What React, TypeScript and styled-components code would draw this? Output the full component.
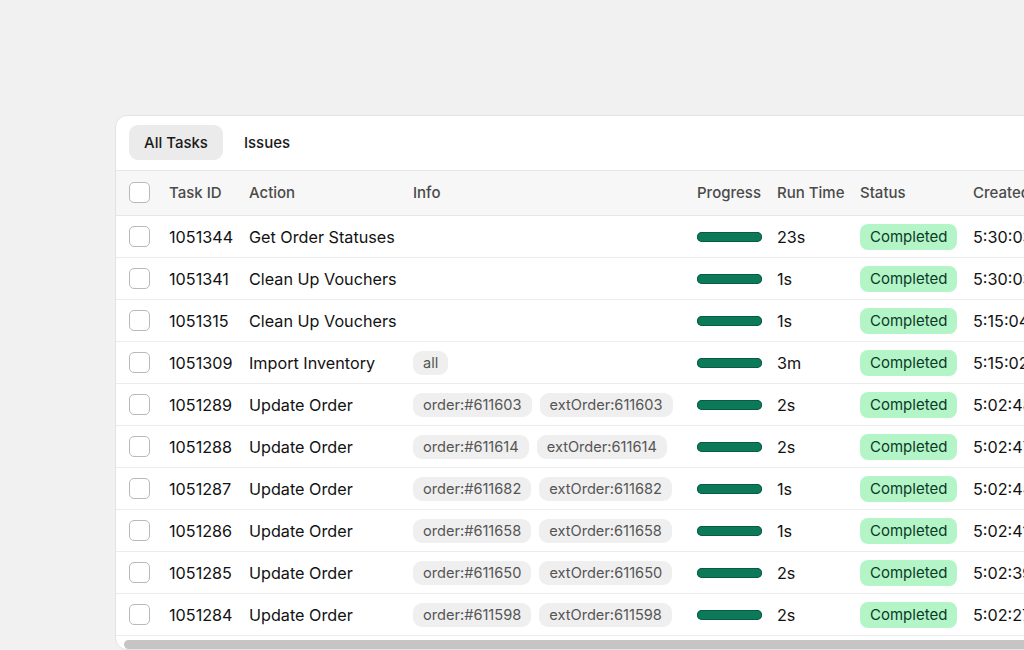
import styled, { createGlobalStyle } from "styled-components";

type Task = {
	id: number;
	action: string;
	info: string[];
	runTime: string;
	created: string;
};

const tasks: Task[] = [
	{ id: 1051344, action: "Get Order Statuses", info: [], runTime: "23s", created: "5:30:03" },
	{ id: 1051341, action: "Clean Up Vouchers", info: [], runTime: "1s", created: "5:30:03" },
	{ id: 1051315, action: "Clean Up Vouchers", info: [], runTime: "1s", created: "5:15:04" },
	{ id: 1051309, action: "Import Inventory", info: ["all"], runTime: "3m", created: "5:15:02" },
	{ id: 1051289, action: "Update Order", info: ["order:#611603", "extOrder:611603"], runTime: "2s", created: "5:02:48" },
	{ id: 1051288, action: "Update Order", info: ["order:#611614", "extOrder:611614"], runTime: "2s", created: "5:02:47" },
	{ id: 1051287, action: "Update Order", info: ["order:#611682", "extOrder:611682"], runTime: "1s", created: "5:02:44" },
	{ id: 1051286, action: "Update Order", info: ["order:#611658", "extOrder:611658"], runTime: "1s", created: "5:02:41" },
	{ id: 1051285, action: "Update Order", info: ["order:#611650", "extOrder:611650"], runTime: "2s", created: "5:02:39" },
	{ id: 1051284, action: "Update Order", info: ["order:#611598", "extOrder:611598"], runTime: "2s", created: "5:02:27" },
];

const App = () => {
	return (
		<>
			<GlobalStyle />
			<Page>
				<Card>
					<TabBar>
						<Tab $active>All Tasks</Tab>
						<Tab>Issues</Tab>
					</TabBar>
					<HeaderRow>
						<Cell>
							<Checkbox />
						</Cell>
						<HeadCell>Task ID</HeadCell>
						<HeadCell>Action</HeadCell>
						<HeadCell>Info</HeadCell>
						<HeadCell>Progress</HeadCell>
						<HeadCell>Run Time</HeadCell>
						<HeadCell>Status</HeadCell>
						<HeadCell>Created</HeadCell>
					</HeaderRow>
					{tasks.map((task) => (
						<Row key={task.id}>
							<Cell>
								<Checkbox />
							</Cell>
							<Cell>{task.id}</Cell>
							<Cell>{task.action}</Cell>
							<TagCell>
								{task.info.map((tag) => (
									<Tag key={tag}>{tag}</Tag>
								))}
							</TagCell>
							<Cell>
								<ProgressBar />
							</Cell>
							<Cell>{task.runTime}</Cell>
							<Cell>
								<StatusBadge>Completed</StatusBadge>
							</Cell>
							<Cell>{task.created}</Cell>
						</Row>
					))}
					<ScrollTrack>
						<ScrollThumb />
					</ScrollTrack>
				</Card>
			</Page>
		</>
	);
};

export default App;

const GlobalStyle = createGlobalStyle`
	html, body {
		margin: 0;
		padding: 0;
		background: #f1f1f1;
		overflow: hidden;
	}
	body {
		font-family: Inter, "Noto Sans", sans-serif;
		color: #111;
	}
`;

const Page = styled.div`
	width: 1024px;
	height: 650px;
	overflow: hidden;
	padding: 115px 0 0 115px;
	box-sizing: border-box;
`;

const Card = styled.div`
	width: 1100px;
	background: #ffffff;
	border: 1px solid #e3e3e3;
	border-radius: 12px;
	overflow: hidden;
	box-sizing: border-box;
`;

const TabBar = styled.div`
	display: flex;
	align-items: center;
	gap: 6px;
	padding: 9px 14px 10px 13px;
`;

const Tab = styled.div<{ $active?: boolean }>`
	height: 35px;
	display: flex;
	align-items: center;
	padding: 0 15px;
	border-radius: 9px;
	font-size: 15px;
	font-weight: 500;
	color: #1a1a1a;
	background: ${({ $active }) => ($active ? "#ebebeb" : "transparent")};
`;

const columns = "53px 80px 164px 284px 80px 83px 113px 1fr";

const HeaderRow = styled.div`
	display: grid;
	grid-template-columns: ${columns};
	align-items: center;
	height: 46px;
	padding-bottom: 1px;
	background: #f7f7f7;
	border-top: 1px solid #e6e6e6;
	border-bottom: 1px solid #e6e6e6;
	box-sizing: border-box;
`;

const Row = styled.div`
	display: grid;
	grid-template-columns: ${columns};
	align-items: center;
	height: 42px;
	border-bottom: 1px solid #ececec;
	box-sizing: border-box;
`;

const Cell = styled.div`
	display: flex;
	align-items: center;
	font-size: 16.2px;
	color: #121212;
	white-space: nowrap;
	&:first-child {
		padding-left: 13px;
	}
`;

const HeadCell = styled(Cell)`
	font-size: 15px;
	font-weight: 500;
	color: #4a4a4a;
`;

const TagCell = styled(Cell)`
	gap: 8px;
`;

const Checkbox = styled.div`
	width: 19px;
	height: 19px;
	border: 1.5px solid #b9b9b9;
	border-radius: 5px;
	background: #fff;
`;

const Tag = styled.span`
	height: 24px;
	display: inline-flex;
	align-items: center;
	padding: 0 10px;
	border-radius: 9px;
	background: #efefef;
	font-size: 14.6px;
	color: #555;
`;

const ProgressBar = styled.div`
	width: 65px;
	height: 10px;
	border-radius: 5px;
	background: #0c7a58;
	box-shadow: inset 0 0 0 1px #075c42;
`;

const StatusBadge = styled.span`
	height: 26px;
	display: inline-flex;
	align-items: center;
	padding: 0 10px;
	border-radius: 8px;
	background: #b4f5c8;
	font-size: 15px;
	color: #0b3a27;
`;

const ScrollTrack = styled.div`
	padding: 4px 0 0 8px;
`;

const ScrollThumb = styled.div`
	width: 1000px;
	height: 9px;
	border-radius: 5px;
	background: #c5c5c5;
`;
